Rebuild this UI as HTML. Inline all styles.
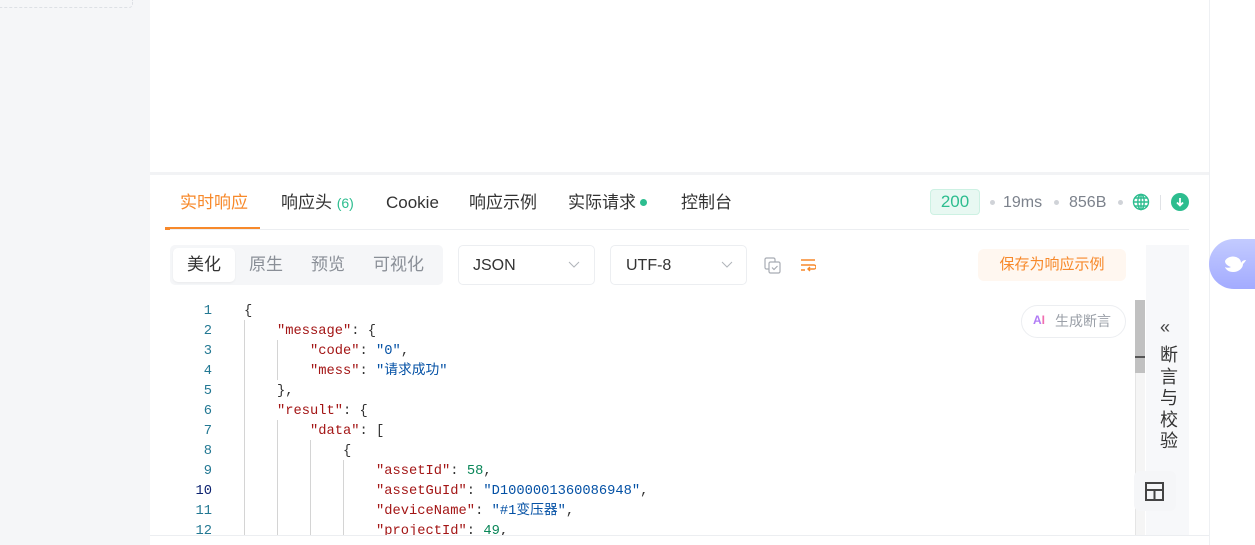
<!DOCTYPE html>
<html><head><meta charset="utf-8">
<style>
*{margin:0;padding:0;box-sizing:border-box}
body{width:1255px;height:545px;overflow:hidden;background:#fff;font-family:"Liberation Sans","Noto Sans CJK SC",sans-serif;position:relative}
.abs{position:absolute}
.side{left:0;top:0;width:150px;height:545px;background:#f5f6f8}
.dash{left:0;top:0;width:133px;height:8px;border-bottom:1px dashed #dde0e5;border-right:1px dashed #dde0e5;border-bottom-right-radius:4px}
.sep{left:150px;top:172px;width:1059px;height:3px;background:#f2f3f5}
.vline{left:1209px;top:0;width:1px;height:545px;background:#eef0f3}
.tab{top:191px;height:24px;line-height:24px;font-size:17px;color:#333;white-space:nowrap}
.seg{top:253px;height:24px;line-height:24px;font-size:17px;color:#8a8f97}
.code{font-family:"Liberation Mono","Noto Sans CJK SC",monospace;font-size:13.75px;white-space:pre;line-height:20px}
.ln{left:170px;width:42px;text-align:right;color:#237893}
.k{color:#a31515}.s{color:#0451a5}.n{color:#098658}.p{color:#333}
.guide{width:1px;background:#d4d4d4}
</style></head><body>
<div class="abs side"></div>
<div class="abs dash"></div>
<div class="abs sep"></div>
<div class="abs vline"></div>

<div class="abs tab" style="left:180px;color:#f7892b">实时响应</div>
<div class="abs" style="left:165px;top:227px;width:95px;height:3px;background:#f7892b"></div>
<div class="abs tab" style="left:281px">响应头 <span style="color:#2dbd8f;font-size:14px">(6)</span></div>
<div class="abs tab" style="left:386px">Cookie</div>
<div class="abs tab" style="left:469px">响应示例</div>
<div class="abs tab" style="left:568px">实际请求<span style="display:inline-block;width:7px;height:7px;border-radius:50%;background:#2dbd8f;margin-left:4px;vertical-align:2px"></span></div>
<div class="abs tab" style="left:681px">控制台</div>
<div class="abs" style="left:170px;top:229px;width:1019px;height:1px;background:#eceef1"></div>

<div class="abs" style="left:930px;top:189px;width:50px;height:26px;background:#e8f8f2;border:1px solid #cdf1e3;border-radius:4px;color:#2dbd8f;font-size:17px;text-align:center;line-height:24px">200</div>
<div class="abs" style="left:990px;top:200px;width:5px;height:5px;border-radius:50%;background:#d0d3d8"></div>
<div class="abs" style="left:1003px;top:192px;font-size:16px;line-height:22px;color:#7c828c">19ms</div>
<div class="abs" style="left:1054px;top:200px;width:5px;height:5px;border-radius:50%;background:#d0d3d8"></div>
<div class="abs" style="left:1069px;top:192px;font-size:16px;line-height:22px;color:#7c828c">856B</div>
<div class="abs" style="left:1118px;top:200px;width:5px;height:5px;border-radius:50%;background:#d0d3d8"></div>
<svg class="abs" style="left:1132px;top:193px" width="18" height="18" viewBox="0 0 18 18" fill="none" stroke="#2dbd8f" stroke-width="1.4"><circle cx="9" cy="9" r="7.5"/><ellipse cx="9" cy="9" rx="3.2" ry="7.5"/><path d="M1.5 9h15M3 5h12M3 13h12M9 1.5v15"/></svg>
<div class="abs" style="left:1160px;top:195px;width:1px;height:15px;background:#e0e2e6"></div>
<svg class="abs" style="left:1171px;top:193px" width="18" height="18" viewBox="0 0 18 18"><circle cx="9" cy="9" r="9" fill="#2dbd8f"/><path d="M9 5v7M6 9.5l3 3 3-3" stroke="#fff" stroke-width="1.8" fill="none"/></svg>

<div class="abs" style="left:170px;top:245px;width:273px;height:40px;background:#f5f6f8;border-radius:5px"></div>
<div class="abs" style="left:173px;top:248px;width:62px;height:34px;background:#fff;border-radius:5px;box-shadow:0 1px 2px rgba(0,0,0,.05)"></div>
<div class="abs seg" style="left:187px;color:#333">美化</div>
<div class="abs seg" style="left:249px">原生</div>
<div class="abs seg" style="left:311px">预览</div>
<div class="abs seg" style="left:373px">可视化</div>

<div class="abs" style="left:458px;top:245px;width:137px;height:40px;border:1px solid #eceef1;border-radius:5px"></div>
<div class="abs" style="left:473px;top:255px;font-size:16px;line-height:22px;color:#333">JSON</div>
<svg class="abs" style="left:568px;top:261px" width="12" height="8"><path d="M1 1l5 5 5-5" stroke="#b0b4ba" fill="none"/></svg>
<div class="abs" style="left:610px;top:245px;width:137px;height:40px;border:1px solid #eceef1;border-radius:5px"></div>
<div class="abs" style="left:626px;top:255px;font-size:16px;line-height:22px;color:#333">UTF-8</div>
<svg class="abs" style="left:721px;top:261px" width="12" height="8"><path d="M1 1l5 5 5-5" stroke="#b0b4ba" fill="none"/></svg>
<svg class="abs" style="left:764px;top:257px" width="18" height="18" fill="none" stroke="#a8acb3" stroke-width="1.2"><rect x="1" y="1" width="10" height="11" rx="1.5"/><rect x="5" y="5" width="11" height="11" rx="1.5" fill="#fff"/><path d="M8 10.5l2 2 3.5-3.5"/></svg>
<svg class="abs" style="left:800px;top:258px" width="16" height="16" fill="none" stroke="#f7892b" stroke-width="1.4"><path d="M1 2h14M1 7h13a2 2 0 010 4H8M1 12h4M10 9l-2 2 2 2"/></svg>

<div class="abs" style="left:978px;top:249px;width:148px;height:32px;background:#fff7f0;border-radius:6px;color:#f7892b;font-size:15px;text-align:center;line-height:32px">保存为响应示例</div>

<div class="abs" style="left:1021px;top:305px;width:105px;height:33px;border:1px solid #eceef1;border-radius:17px"></div>
<div class="abs" style="left:1033px;top:313px;font-size:12px;font-weight:bold;color:#b17cf5">A<span style="color:#f06fb0">I</span></div>
<div class="abs" style="left:1055px;top:311px;font-size:14px;line-height:20px;color:#9ba0a8">生成断言</div>

<div class="abs" style="left:1135px;top:300px;width:10px;height:235px;background:#f5f5f5;border-left:1px solid #e5e5e5"></div>
<div class="abs" style="left:1135px;top:300px;width:10px;height:73px;background:#c1c1c1"></div>
<div class="abs" style="left:1135px;top:356px;width:10px;height:2px;background:#555"></div>

<div class="abs" style="left:1146px;top:245px;width:43px;height:290px;background:#f7f8fa"></div>
<div class="abs" style="left:1160px;top:317px;font-size:18px;color:#444">«</div>
<div class="abs" style="left:1158px;top:345px;width:22px;font-size:18px;color:#333;line-height:21.5px;text-align:center">断<br>言<br>与<br>校<br>验</div>
<div class="abs" style="left:1134px;top:471px;width:42px;height:40px;background:#f5f6f8;border-radius:6px"></div>
<svg class="abs" style="left:1145px;top:482px" width="19" height="19" fill="none" stroke="#444" stroke-width="2"><rect x="1" y="1" width="17" height="17"/><path d="M1 8h17M9.5 8v10"/></svg>

<div class="abs" style="left:150px;top:535px;width:1059px;height:1px;background:#eceef1"></div>

<div class="abs" style="left:1209px;top:239px;width:50px;height:50px;border-radius:25px 0 0 25px;background:linear-gradient(180deg,#c3cbff,#a3abff)"></div>
<svg class="abs" style="left:1222px;top:253px" width="26" height="22" viewBox="0 0 26 22"><path d="M3 8c2-4 8-6 13-3 2 1 3 3 3 5 1-2 3-3 5-3-1 2-2 3-3 4 0 4-4 8-10 8-4 0-7-2-8-5 2 1 4 1 6 0-3-1-6-3-6-6z" fill="#fff"/></svg>

<div class="abs code" style="left:0;top:300px;width:1135px;height:235px;overflow:hidden">
<div class="abs ln" style="top:2px">1
2
3
4
5
6
7
8
9
<span style="color:#0b216f">10</span>
11
12</div>
<div class="abs guide" style="left:244px;top:20px;height:220px"></div>
<div class="abs guide" style="left:277px;top:40px;height:40px"></div>
<div class="abs guide" style="left:277px;top:120px;height:120px"></div>
<div class="abs guide" style="left:310px;top:140px;height:100px"></div>
<div class="abs guide" style="left:343px;top:160px;height:80px"></div>
<div class="abs" style="left:244px;top:2px"><span class="p">{</span>
    <span class="k">"message"</span><span class="p">: {</span>
        <span class="k">"code"</span><span class="p">: </span><span class="s">"0"</span><span class="p">,</span>
        <span class="k">"mess"</span><span class="p">: </span><span class="s">"请求成功"</span>
    <span class="p">},</span>
    <span class="k">"result"</span><span class="p">: {</span>
        <span class="k">"data"</span><span class="p">: [</span>
            <span class="p">{</span>
                <span class="k">"assetId"</span><span class="p">: </span><span class="n">58</span><span class="p">,</span>
                <span class="k">"assetGuId"</span><span class="p">: </span><span class="s">"D1000001360086948"</span><span class="p">,</span>
                <span class="k">"deviceName"</span><span class="p">: </span><span class="s">"#1变压器"</span><span class="p">,</span>
                <span class="k">"projectId"</span><span class="p">: </span><span class="n">49</span><span class="p">,</span></div>
</div>
</body></html>
